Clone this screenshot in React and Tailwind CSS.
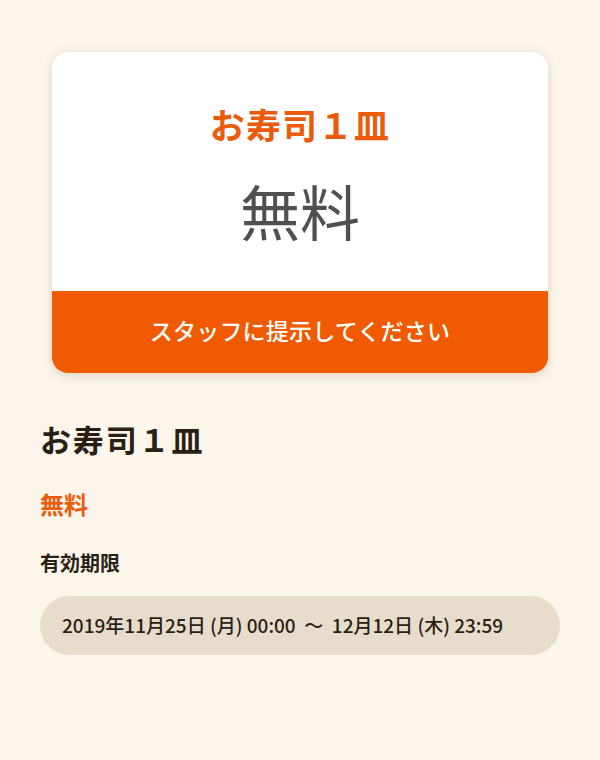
import React from 'react';

const font = { fontFamily: '"Noto Sans CJK JP", "Noto Sans", sans-serif' };

function CouponCard() {
  return (
    <div className="mx-[52px] rounded-2xl overflow-hidden bg-white shadow-[0_2px_10px_rgba(120,100,60,0.25)]">
      <div className="h-[239px] flex flex-col items-center pt-[50px]">
        <p className="text-[35px] leading-[44px] font-bold text-[#ec5b0b] tracking-[0.03em]">お寿司１皿</p>
        <p className="mt-[28px] text-[60px] leading-[72px] text-[#505050]">無料</p>
      </div>
      <div className="h-[82px] bg-[#f05a00] flex items-center justify-center pb-[4px]">
        <p className="text-[23px] font-medium text-white tracking-[0.01em]">スタッフに提示してください</p>
      </div>
    </div>
  );
}

export default function App() {
  return (
    <div className="min-h-[760px] bg-[#fcf5ea] pt-[52px]" style={font}>
      <CouponCard />
      <div className="px-[40px] pt-[46px]">
        <h1 className="text-[31px] leading-[40px] font-bold text-[#2a1f15] tracking-[0.06em]">お寿司１皿</h1>
        <p className="mt-[29px] text-[24px] leading-[32px] font-bold text-[#ec5b0b]">無料</p>
        <p className="mt-[29px] text-[20px] leading-[28px] font-bold text-[#2a1f15]">有効期限</p>
        <div className="mt-[19px] h-[59px] rounded-full bg-[#e7ddcd] flex items-center px-[22px]">
          <p className="text-[19px] font-medium text-[#2a1f15] whitespace-pre">2019年11月25日 (月) 00:00  ～  12月12日 (木) 23:59</p>
        </div>
      </div>
    </div>
  );
}
